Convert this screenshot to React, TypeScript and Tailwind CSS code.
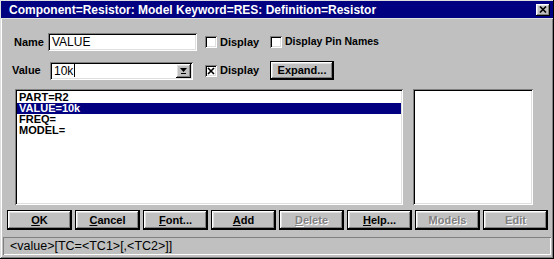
const raised =
  "shadow-[inset_-1px_-1px_0_#000,inset_1px_1px_0_#fff,inset_-2px_-2px_0_#808080,inset_2px_2px_0_#dfdfdf]"
const sunken =
  "shadow-[inset_1px_1px_0_#808080,inset_-1px_-1px_0_#fff,inset_2px_2px_0_#000,inset_-2px_-2px_0_#dfdfdf]"

const font = "font-['Liberation_Sans',Arial,sans-serif]"

const Check = ({ checked }: { checked?: boolean }) => (
  <div className={`w-[12px] h-[12px] bg-white ${sunken} flex items-center justify-center`}>
    {checked && (
      <svg width="8" height="8" viewBox="0 0 8 8">
        <path d="M1 1L7 7M7 1L1 7" stroke="#000" strokeWidth="1.6" />
      </svg>
    )}
  </div>
)

interface BtnProps {
  label: string
  mnemonic?: number
  disabled?: boolean
}

const Btn = ({ label, mnemonic, disabled }: BtnProps) => {
  const parts =
    mnemonic === undefined ? (
      label
    ) : (
      <>
        {label.slice(0, mnemonic)}
        <span className="underline underline-offset-1">{label[mnemonic]}</span>
        {label.slice(mnemonic + 1)}
      </>
    )
  return (
    <div
      className={`w-[65px] h-[20px] border border-black bg-[#c0c0c0] ${raised} flex items-center justify-center text-[11px] font-bold ${
        disabled ? "text-[#808080] [text-shadow:1px_1px_0_#fff]" : "text-black"
      }`}
    >
      {parts}
    </div>
  )
}

export default function App() {
  return (
    <div
      className={`w-[554px] h-[259px] bg-[#c0c0c0] ${font} flex flex-col overflow-hidden shadow-[inset_-1px_-1px_0_#000,inset_1px_1px_0_#dfdfdf,inset_-2px_-2px_0_#808080,inset_2px_2px_0_#fff]`}
    >
      {/* title bar */}
      <div className="h-[18px] mx-[1px] mt-[1px] bg-[#000080] flex items-center justify-between pl-[8px] pr-[3px] border-b border-[#dfdfdf]">
        <span className="text-white font-bold text-[12px] leading-none">
          Component=Resistor: Model Keyword=RES: Definition=Resistor
        </span>
        <div className={`w-[14px] h-[12px] bg-[#c0c0c0] ${raised} flex items-center justify-center`}>
          <svg width="8" height="7" viewBox="0 0 8 7">
            <path d="M1 0.5L7 6.5M7 0.5L1 6.5" stroke="#000" strokeWidth="1.6" />
          </svg>
        </div>
      </div>

      {/* name row */}
      <div className="mt-[14px] h-[18px] flex items-center">
        <span className="ml-[14px] w-[34px] text-[11px] font-bold">Name</span>
        <div className={`w-[149px] h-[18px] bg-white ${sunken} flex items-center pl-[4px] text-[12px]`}>
          VALUE
        </div>
        <div className="ml-[8px] w-[65px] flex items-center gap-[3px]">
          <Check />
          <span className="text-[11px] font-bold">Display</span>
        </div>
        <div className="flex items-center gap-[3px]">
          <Check />
          <span className="text-[10.5px] font-bold">Display Pin Names</span>
        </div>
      </div>

      {/* value row */}
      <div className="mt-[10px] h-[19px] flex items-center">
        <span className="ml-[12px] w-[38px] text-[11px] font-bold">Value</span>
        <div className={`w-[143px] h-[18px] bg-white ${sunken} flex items-center pl-[4px] pr-[2px] text-[12px]`}>
          <span>10k</span>
          <span className="w-[1px] h-[13px] bg-black ml-[1px]" />
          <div className="flex-1" />
          <div className={`w-[15px] h-[14px] bg-[#c0c0c0] ${raised} flex items-center justify-center`}>
            <svg width="7" height="6" viewBox="0 0 7 6">
              <path d="M0 0H7L3.5 4Z" fill="#000" />
              <path d="M1 5.5H6" stroke="#000" strokeWidth="1" />
            </svg>
          </div>
        </div>
        <div className="ml-[12px] w-[65px] flex items-center gap-[3px]">
          <Check checked />
          <span className="text-[11px] font-bold">Display</span>
        </div>
        <div
          className={`w-[64px] h-[19px] border border-black bg-[#c0c0c0] ${raised} flex items-center justify-center text-[11px] font-bold`}
        >
          Expand...
        </div>
      </div>

      {/* lists */}
      <div className="mt-[9px] flex gap-[10px] ml-[15px]">
        <div className={`w-[388px] h-[116px] bg-white ${sunken} p-[2px] pt-[3px] text-[11px] font-bold leading-[11px]`}>
          <div className="pl-[2px]">PART=R2</div>
          <div className="pl-[2px] bg-[#000080] text-white">VALUE=10k</div>
          <div className="pl-[2px]">FREQ=</div>
          <div className="pl-[2px]">MODEL=</div>
        </div>
        <div className={`w-[120px] h-[116px] bg-white ${sunken}`} />
      </div>

      {/* buttons */}
      <div className="mt-[5px] ml-[7px] flex gap-[3px]">
        <Btn label="OK" mnemonic={0} />
        <Btn label="Cancel" mnemonic={0} />
        <Btn label="Font..." mnemonic={0} />
        <Btn label="Add" mnemonic={0} />
        <Btn label="Delete" mnemonic={0} disabled />
        <Btn label="Help..." mnemonic={0} />
        <Btn label="Models" disabled />
        <Btn label="Edit" disabled />
      </div>

      {/* status bar */}
      <div className="mt-[7px] mx-[3px] h-[18px] shadow-[inset_1px_1px_0_#808080,inset_-1px_-1px_0_#fff] flex items-center pl-[7px] text-[12.5px]">
        {"<value>[TC=<TC1>[,<TC2>]]"}
      </div>
    </div>
  )
}
